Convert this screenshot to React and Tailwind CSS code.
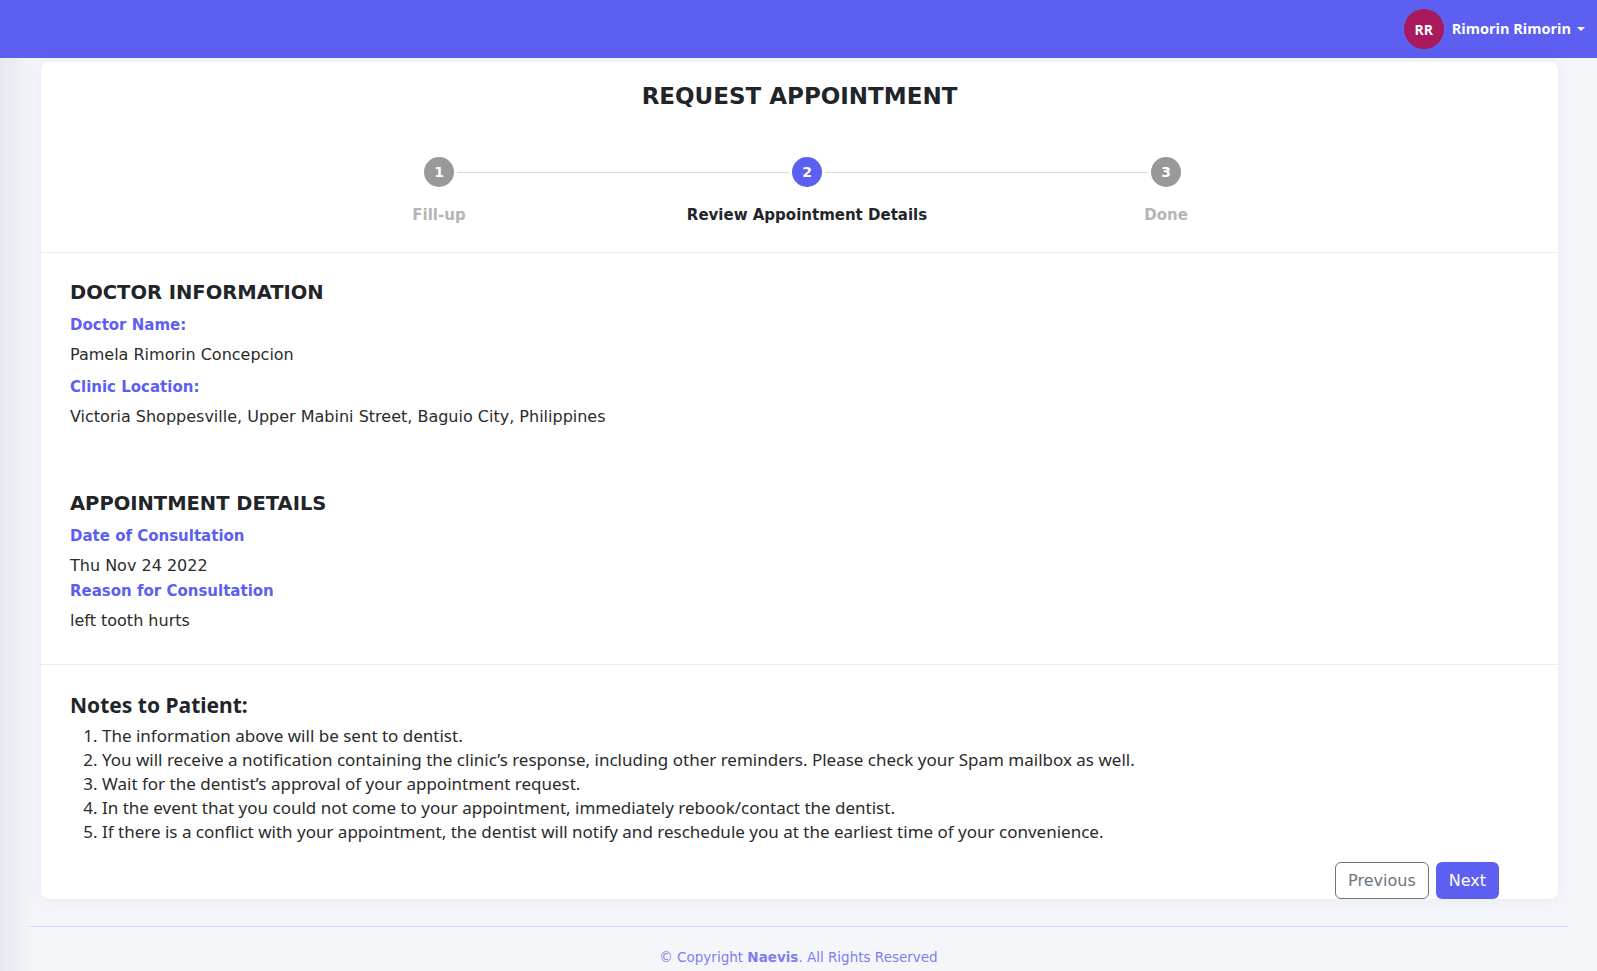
import { useState } from "react"

const MONT = "font-['DejaVu_Sans',_'Open_Sans',_sans-serif]"
const NOTE = "font-['Noto_Sans',_'Open_Sans',_sans-serif]"
const HEAD = "font-['Open_Sans',_'Liberation_Sans',_sans-serif]"

const steps = [
  { n: 1, label: "Fill-up" },
  { n: 2, label: "Review Appointment Details" },
  { n: 3, label: "Done" },
]

const notes = [
  "The information above will be sent to dentist.",
  "You will receive a notification containing the clinic\u2019s response, including other reminders. Please check your Spam mailbox as well.",
  "Wait for the dentist\u2019s approval of your appointment request.",
  "In the event that you could not come to your appointment, immediately rebook/contact the dentist.",
  "If there is a conflict with your appointment, the dentist will notify and reschedule you at the earliest time of your convenience.",
]

function Step({ n, label, active }) {
  return (
    <div className="flex w-[30px] flex-col items-center">
      <div
        className={`flex h-[30px] w-[30px] items-center justify-center rounded-full text-[14px] font-bold text-white ${
          active ? "bg-[#5c5ff0]" : "bg-[#999999]"
        }`}
      >
        {n}
      </div>
      <span
        className={`mt-[18px] whitespace-nowrap text-[15px] font-bold leading-5 ${
          active ? "text-[#212529]" : "text-[#b5b5b5]"
        }`}
      >
        {label}
      </span>
    </div>
  )
}

function Field({ label, value, gap = "mt-[12px]" }) {
  return (
    <>
      <div className={`${gap} text-[15px] font-bold leading-5 text-[#5c5ff0]`}>{label}</div>
      <div className="mt-[10px] text-[16px] leading-5 text-[#2b2b2b]">{value}</div>
    </>
  )
}

export default function App() {
  const [step] = useState(2)

  return (
    <div className={`min-h-[971px] bg-[linear-gradient(to_right,#e6e9ef,#f5f6fa_36px)] ${MONT}`}>
      {/* Header */}
      <header className={`flex h-[58px] items-center justify-end bg-[#5c5ff0] pr-[12px] ${HEAD}`}>
        <div className="flex items-center">
          <div className="flex h-10 w-10 items-center justify-center rounded-full bg-[#a8195e] text-[14px] font-bold text-white">
            RR
          </div>
          <span className="ml-[8px] text-[14.5px] font-bold text-white">Rimorin Rimorin</span>
          <span className="ml-[6px] h-0 w-0 border-x-[4px] border-t-[4px] border-x-transparent border-t-white" />
        </div>
      </header>

      {/* Card */}
      <main className="pl-[41px] pr-[39px] pt-[4px]">
        <div className="rounded-lg bg-white shadow-[0_0_20px_rgba(1,41,112,0.05)]">
          <div className="pt-[20px] pb-[27px]">
            <h1 className="text-center text-[23px] font-bold leading-[29px] text-[#212529]">
              REQUEST APPOINTMENT
            </h1>

            {/* Stepper */}
            <div className="mt-[46px] flex items-start pl-[383px]">
              <Step {...steps[0]} active={step === 1} />
              <div className="mx-[3px] mt-[15px] h-px w-[332px] bg-[#dcdcdc]" />
              <Step {...steps[1]} active={step === 2} />
              <div className="mx-[3px] mt-[15px] h-px w-[323px] bg-[#dcdcdc]" />
              <Step {...steps[2]} active={step === 3} />
            </div>
          </div>

          <div className="border-t border-[#ececec] px-[29px] pt-[28px] pb-[33px]">
            <h2 className="text-[19.5px] font-bold leading-6 text-[#212529]">DOCTOR INFORMATION</h2>
            <Field label="Doctor Name:" value="Pamela Rimorin Concepcion" gap="mt-[10px]" />
            <Field label="Clinic Location:" value="Victoria Shoppesville, Upper Mabini Street, Baguio City, Philippines" />

            <h2 className="mt-[65px] text-[19.5px] font-bold leading-6 text-[#212529]">APPOINTMENT DETAILS</h2>
            <Field label="Date of Consultation" value="Thu Nov 24 2022" gap="mt-[10px]" />
            <Field label="Reason for Consultation" value="left tooth hurts" gap="mt-[5px]" />
          </div>

          <div className="border-t border-[#ececec] px-[29px] pt-[28px]">
            <h3 className={`${NOTE} text-[21px] font-bold leading-6 text-[#212529]`}>Notes to Patient:</h3>
            <ol className={`${NOTE} mt-[7px] list-decimal pl-[32px] text-[17px] leading-6 text-[#2b2b2b]`}>
              {notes.map((t) => (
                <li key={t}>{t}</li>
              ))}
            </ol>

            <div className="mt-[18px] flex justify-end gap-[7px] pr-[30px]">
              <button className="h-[37px] rounded-md border border-[#6c757d] px-[12px] text-[16px] text-[#6c757d]">
                Previous
              </button>
              <button className="h-[37px] rounded-md bg-[#5c5ff0] px-[13px] text-[16px] text-white">
                Next
              </button>
            </div>
          </div>
        </div>
      </main>

      {/* Footer */}
      <footer className="mx-[28px] mt-[27px] border-t border-[#cddfff] pt-[20px] text-center text-[13.5px] text-[#7c7ff1]">
        © Copyright <span className="font-bold">Naevis</span>. All Rights Reserved
      </footer>
    </div>
  )
}
